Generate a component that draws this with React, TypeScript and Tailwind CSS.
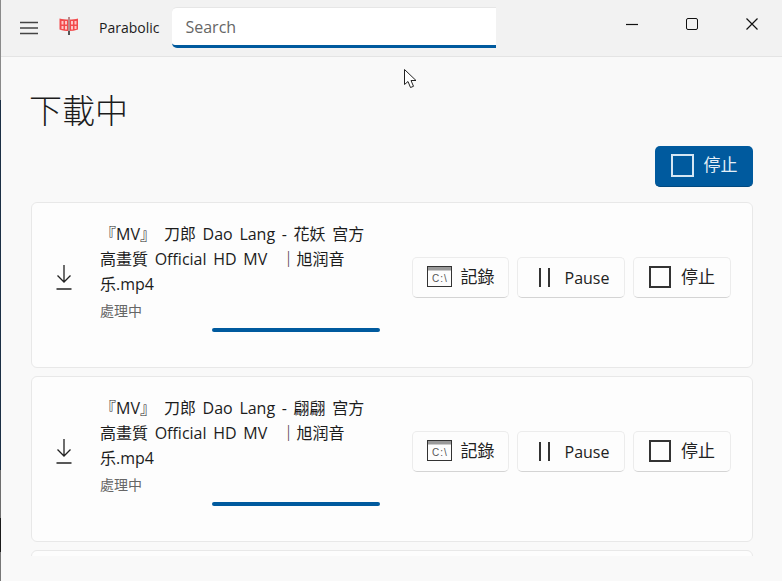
const CJK = "font-['Open_Sans','Noto_Sans_CJK_TC',sans-serif]";

function MenuIcon() {
  return (
    <svg className="h-[18px] w-5" viewBox="0 0 20 18" fill="none" stroke="#444" strokeWidth={1.3} aria-hidden>
      <path d="M1 3.500h18M1 9h18M1 14.500h18" />
    </svg>
  );
}

function AppLogo() {
  return (
    <svg className="h-5 w-5" viewBox="0 0 20 20" aria-hidden>
      <path d="M.5 2.500c3 .8 6 1 9.500 1s6.500-.2 9-1v11c-3 1-6 1.500-9 1.500s-6.500-.5-9.500-1.500Z" fill="#f24b4d" />
      <g fill="#ffc6c6">
        <rect x="2.500" y="5" width="2" height="3.500" />
        <rect x="6" y="5" width="2" height="3.500" />
        <rect x="12" y="5" width="2" height="3.500" />
        <rect x="15.500" y="5" width="2" height="3.500" />
        <rect x="2.500" y="10" width="2" height="3" />
        <rect x="6" y="10" width="2" height="3.500" />
        <rect x="12" y="10" width="2" height="3.500" />
        <rect x="15.500" y="10" width="2" height="3" />
      </g>
      <path d="M10 1v14" stroke="#b98a8a" strokeWidth={2} />
      <path d="M10 15v4" stroke="#555" strokeWidth={2} />
    </svg>
  );
}

function DownloadIcon() {
  return (
    <svg className="h-[25px] w-4" viewBox="0 0 16 25" fill="none" stroke="#222" strokeWidth={1.3} aria-hidden>
      <path d="M8 0v17M1.500 10.500 8 17l6.500-6.500M.5 24h15" />
    </svg>
  );
}

function LogIcon() {
  return (
    <svg className="h-[21px] w-[25px]" viewBox="0 0 25 21" fill="none" aria-hidden>
      <rect x="0.500" y="0.500" width="24" height="20" stroke="#333" />
      <rect x="1" y="1" width="23" height="3.500" fill="#999" />
      <text x="5" y="15.500" fontSize="10" letterSpacing="1" fill="#555" fontFamily="Liberation Sans, sans-serif">
        C:\
      </text>
    </svg>
  );
}

function StopIcon({ light = false }: { light?: boolean }) {
  return (
    <div className={`border-2 ${light ? 'h-[23px] w-[23px] border-[#d5e6f3]' : 'h-[22px] w-[22px] border-[#333]'}`} />
  );
}

function ActionButton({
  icon,
  label,
  className,
}: {
  icon: React.ReactNode;
  label: string;
  className: string;
}) {
  return (
    <button
      type="button"
      className={`flex h-[41px] items-center justify-center rounded-[5px] border border-[#ececec] border-b-[#d4d4d4] bg-[#fdfdfd] text-[#222] ${className}`}
    >
      {icon}
      <span>{label}</span>
    </button>
  );
}

function DownloadRow({ name }: { name: string }) {
  return (
    <article className="flex h-[166px] shrink-0 rounded-[6px] border border-[#e8e8e8] bg-[#fdfdfd]">
      <div className="flex w-[64px] shrink-0 justify-center pt-[62px]">
        <DownloadIcon />
      </div>
      <div className="w-[284px] shrink-0 pt-[19px] pl-[4px]">
        <h3 className="text-[16px] leading-[25px] font-normal whitespace-nowrap text-[#1c1c1c] [word-spacing:2.5px]">
          <span className="mr-[8px]">『MV』</span>刀郎 Dao Lang - {name} 宫方
          <br />
          高畫質 Official HD MV{'\u00a0'} ｜旭润音
          <br />
          乐.mp4
        </h3>
        <p className="mt-[5px] text-[14px] leading-[18px] text-[#666]">處理中</p>
        <div className="mt-[8px] ml-[112px] h-1 w-[168px] rounded-full bg-[#005a9e]" />
      </div>
      <div className="ml-[32px] flex gap-[8px] pt-[54px]">
        <ActionButton className="w-[97px] gap-[9px] pb-[2px] text-[17px]" icon={<LogIcon />} label="記錄" />
        <ActionButton
          className="w-[108px] gap-[15px] pl-[6px] text-[16px]"
          icon={
            <span className="flex h-[19px] gap-[7px]">
              <span className="h-[19px] w-[2px] bg-[#333]" />
              <span className="h-[19px] w-[2px] bg-[#333]" />
            </span>
          }
          label="Pause"
        />
        <ActionButton className="w-[98px] gap-[10px] pb-[2px] text-[17px]" icon={<StopIcon />} label="停止" />
      </div>
    </article>
  );
}

function MouseCursor() {
  return (
    <svg className="absolute top-[69px] left-[404px] h-5 w-[13px]" viewBox="0 0 13 20" aria-hidden>
      <path d="M.5.500v15l3.500-3 2.500 6 3-1.200-2.500-5.800h5Z" fill="#fff" stroke="#222" strokeWidth={1} />
    </svg>
  );
}

function DesktopEdge() {
  return (
    <div className="absolute top-0 left-0 flex h-full w-px flex-col">
      <div className="h-[100px] bg-[#8a8a8a]" />
      <div className="h-[370px] bg-[#1b2f45]" />
      <div className="h-[48px] bg-[#6e6e6e]" />
      <div className="h-[34px] bg-[#1a1a1a]" />
      <div className="flex-1 bg-[#777]" />
    </div>
  );
}

export default function App() {
  return (
    <div className={`relative flex h-[581px] w-[782px] flex-col overflow-hidden bg-[#f9f9f9] ${CJK}`}>
      <header className="flex h-[57px] shrink-0 items-center border-b border-[#e4e4e4] bg-[#f2f2f2]">
        <div className="ml-[19px]">
          <MenuIcon />
        </div>
        <div className="mt-[-4px] ml-[20px]">
          <AppLogo />
        </div>
        <span className="mt-[-2px] ml-[20px] text-[14px] text-[#1c1c1c]">Parabolic</span>
        <div className="mt-[-2px] ml-[13px] flex h-[41px] w-[324px] items-center rounded-l-[5px] border-t border-[#e6e6e6] border-b-[3px] border-b-[#005a9e] bg-white pt-[1px] pl-[13px] text-[16px] text-[#666]">
          Search
        </div>
        <div className="ml-auto flex items-center gap-[48px] pr-[24px] pb-[8px]">
          <svg className="h-3 w-3" viewBox="0 0 12 12" fill="none" stroke="#111" strokeWidth={1.2} aria-hidden>
            <path d="M0 6.500h12" />
          </svg>
          <div className="h-3 w-3 rounded-[2px] border-[1.5px] border-[#111]" />
          <svg className="h-3 w-3" viewBox="0 0 12 12" fill="none" stroke="#111" strokeWidth={1.2} aria-hidden>
            <path d="M.5.500l11 11M11.500.500l-11 11" />
          </svg>
        </div>
      </header>

      <main className="flex min-h-0 flex-col pr-[29px] pl-[31px]">
        <h1 className="mt-[32px] ml-[-2px] h-[44px] text-[33px] leading-[44px] font-light text-[#1c1c1c]">下載中</h1>
        <div className="mt-[13px] flex justify-end">
          <button
            type="button"
            className="flex h-[41px] w-[98px] items-center justify-center gap-[10px] rounded-[5px] border-b border-b-[#00487f] bg-[#005a9e] pb-[2px] text-[17px] text-[#e4eff7]"
          >
            <StopIcon light />
            <span>停止</span>
          </button>
        </div>
        <div className="mt-[15px] flex h-[354px] flex-col gap-[8px] overflow-hidden">
          <DownloadRow name="花妖" />
          <DownloadRow name="翩翩" />
          <div className="h-[40px] shrink-0 rounded-[6px] border border-[#e8e8e8] bg-[#fdfdfd]" />
        </div>
      </main>

      <DesktopEdge />
      <MouseCursor />
    </div>
  );
}
